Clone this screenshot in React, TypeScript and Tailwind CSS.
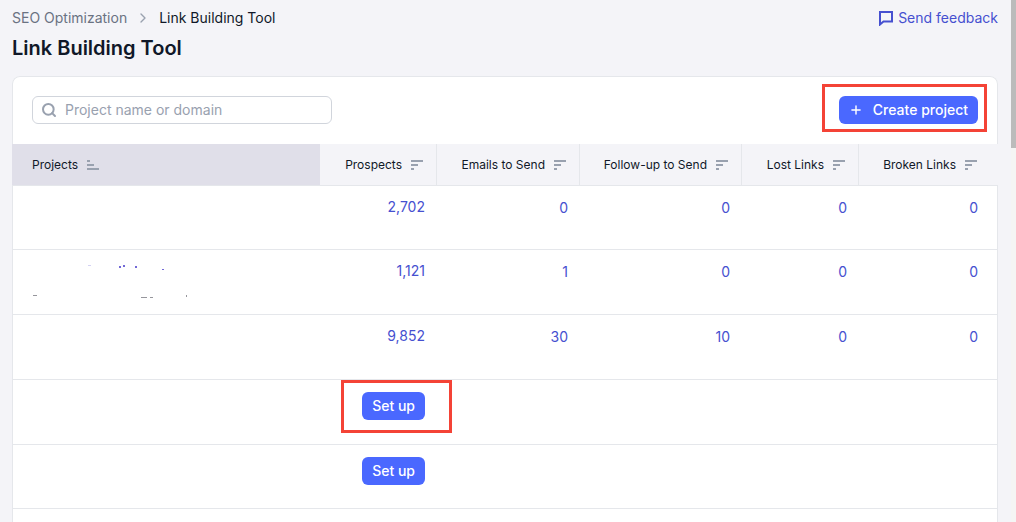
import { Search, Plus, ChevronRight } from "lucide-react";

function SortIcon({ left = false }: { left?: boolean }) {
  return (
    <svg width="14" height="12" viewBox="0 0 14 12" className="shrink-0 text-gray-400" fill="currentColor">
      {left ? (
        <>
          <rect x="1" y="1" width="3" height="2" />
          <rect x="1" y="5" width="7" height="2" />
          <rect x="1" y="9" width="12" height="2" />
        </>
      ) : (
        <>
          <rect x="1" y="1" width="12" height="2" />
          <rect x="1" y="5" width="7" height="2" />
          <rect x="1" y="9" width="3" height="2" />
        </>
      )}
    </svg>
  );
}

const grid = "grid grid-cols-[308px_117px_143px_162px_117px_139px]";

const headers = ["Prospects", "Emails to Send", "Follow-up to Send", "Lost Links", "Broken Links"];
const rows = [
  { h: "h-16", cells: ["2,702", "0", "0", "0", "0"] },
  { h: "h-[65px]", cells: ["1,121", "1", "0", "0", "0"], traces: true },
  { h: "h-[65px]", cells: ["9,852", "30", "10", "0", "0"] },
];

function Traces() {
  return (
    <svg width="308" height="64" viewBox="0 0 308 64" className="block">
      <g fill="#4338ca" opacity="0.75">
        <rect x="76" y="15" width="3" height="1" opacity="0.3" />
        <rect x="107" y="16" width="2" height="2" />
        <rect x="111" y="15" width="2" height="2" />
        <rect x="123" y="16" width="2" height="2" />
        <rect x="150" y="19" width="2" height="1" />
      </g>
      <g fill="#52525b" opacity="0.6">
        <rect x="21" y="45" width="4" height="1" />
        <rect x="129" y="47" width="6" height="1" />
        <rect x="138" y="47" width="3" height="1" />
        <rect x="174" y="45" width="1" height="2" />
      </g>
    </svg>
  );
}

function Cell({ value, index }: { value: string; index: number }) {
  const pad = index === 0 ? "pt-2.75 pr-3" : index === 4 ? "pt-3 pr-5" : "pt-3 pr-3";
  return <div className={`flex justify-end text-sm text-[#4650d0] ${pad}`}>{value}</div>;
}

export default function App() {
  return (
    <div
      className="relative h-[522px] overflow-hidden bg-[#f4f4f8] text-gray-900"
      style={{ fontFamily: "Inter, sans-serif" }}
    >
      <div className="absolute right-0 top-0 h-full w-1.25 bg-stone-100">
        <div className="h-37 bg-[#bbbbbb]" />
      </div>

      <div className="pl-3 pr-4.5 pt-2">
        <div className="flex items-center justify-between text-sm leading-5">
          <div className="flex items-center gap-2">
            <span className="text-gray-500">SEO Optimization</span>
            <ChevronRight size={16} strokeWidth={2} className="text-gray-400" />
            <span>Link Building Tool</span>
          </div>
          <div className="flex items-center gap-1 text-[#4650d0]">
            <svg width="16" height="16" viewBox="0 0 16 16" fill="none" stroke="currentColor" strokeWidth="2">
              <path d="M2 2h12v9.5H5.5L2 14.5z" />
            </svg>
            <span>Send feedback</span>
          </div>
        </div>
        <h1 className="mt-1.5 text-xl font-semibold leading-7">Link Building Tool</h1>

        <div className="mt-3.5 h-[500px] overflow-hidden rounded-lg bg-white inset-ring inset-ring-gray-200">
          <div className="flex h-17 items-center justify-between px-5">
            <div className="flex h-7 w-75 items-center gap-2 rounded-md border border-gray-300 pl-2">
              <Search size={16} strokeWidth={3} className="text-gray-400" />
              <span className="text-sm text-gray-400">Project name or domain</span>
            </div>
            <button className="flex h-7 items-center gap-2.5 rounded-md bg-[#4a68ff] px-2.5 text-sm font-medium text-white">
              <Plus size={14} strokeWidth={2.5} />
              Create project
            </button>
          </div>

          <div className={`${grid} h-10.5 border-b border-gray-200 text-xs`}>
            <div className="flex items-center gap-2 bg-[#e0dfe9] pl-5">
              Projects
              <SortIcon left />
            </div>
            {headers.map((h, i) => (
              <div
                key={h}
                className={`flex items-center justify-end gap-2 bg-[#f4f4f8] ${i < 4 ? "border-r border-gray-200 pr-3" : "pr-5"}`}
              >
                {h}
                <SortIcon />
              </div>
            ))}
          </div>

          {rows.map((r) => (
            <div key={r.cells[0]} className={`${grid} ${r.h} border-b border-gray-200`}>
              <div>{r.traces && <Traces />}</div>
              {r.cells.map((v, i) => (
                <Cell key={i} value={v} index={i} />
              ))}
            </div>
          ))}

          {["h-[65px]", "h-16"].map((h) => (
            <div key={h} className={`${grid} ${h} border-b border-gray-200`}>
              <div />
              <div className="flex items-start justify-end pr-3 pt-3">
                <button className="flex h-7 items-center rounded-md bg-[#4a68ff] px-2.5 text-sm font-medium text-white">
                  Set up
                </button>
              </div>
            </div>
          ))}
        </div>
      </div>

      <div className="absolute left-[822px] top-[84px] h-12 w-[165px] border-[3px] border-[#f44336]" />
      <div className="absolute left-[341px] top-[380px] h-[53px] w-[111px] border-[3px] border-[#f44336]" />
    </div>
  );
}
